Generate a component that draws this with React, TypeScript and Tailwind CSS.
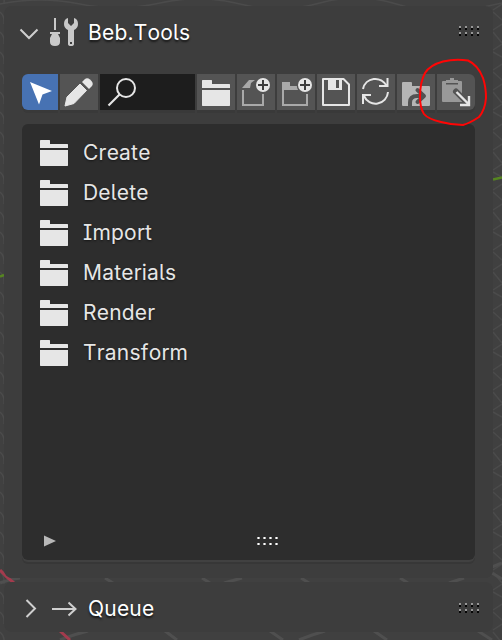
import type { ReactNode } from 'react';

const LIGHT = '#e6e6e6';

function Dots({ dark = true }: { dark?: boolean }) {
  return (
    <svg width="24" height="12" viewBox="0 0 24 12" shapeRendering="crispEdges" className="shrink-0">
      {[0, 6, 12, 18].map((x) =>
        [0, 6].map((y) => (
          <g key={`${x}-${y}`}>
            <rect x={x} y={y} width={dark ? 2 : 3} height="2" fill={dark ? '#979797' : '#b0b0b0'} />
            {dark ? <rect x={x} y={y + 2} width="2" height="2" fill="#050505" /> : <rect x={x + 1} y={y} width="1" height="2" fill="#fff" />}
          </g>
        )),
      )}
    </svg>
  );
}

function Folder() {
  return (
    <svg width="28" height="26" viewBox="0 0 28 26" fill={LIGHT} className="shrink-0">
      <path d="M.5 0h9l.5.500V4h17.500l.5.500V8H0V.5zM0 10h28v15.500l-.5.500H.5l-.5-.5z" />
    </svg>
  );
}

function Plus({ x }: { x: number }) {
  return (
    <g>
      <circle cx={x} cy="11" r="8.300" fill="#545454" />
      <circle cx={x} cy="11" r="7" fill={LIGHT} />
      <path d={`M${x - 5} 11h10M${x} 6v10`} stroke="#3d3d3d" strokeWidth="2" fill="none" />
    </g>
  );
}

function Glyph({ children }: { children: ReactNode }) {
  return (
    <svg width="38" height="36" viewBox="0 0 38 36" fill="none" className="block shrink-0">
      {children}
    </svg>
  );
}

function Tool({ children, label, className = '' }: { children: ReactNode; label: string; className?: string }) {
  return (
    <button aria-label={label} className={`h-9 w-[38px] shrink-0 overflow-hidden bg-[#545454] shadow-[0_3px_0_#393939] ${className}`}>
      {children}
    </button>
  );
}

function Toolbar() {
  return (
    <div className="flex h-9 w-[453px] gap-[2px]">
      <button aria-label="Select" className="h-9 w-9 shrink-0 overflow-hidden rounded-l-[6px] bg-[#4772b3] shadow-[0_3px_0_#393939]">
        <Glyph><path d="M8 8 30 17 20.5 20.5 17 30.5z" fill="#fff" /></Glyph>
      </button>
      <Tool label="Edit">
        <Glyph>
          <path d="M5 32 7 23 20 10 26.500 16.500 14 29.500z" fill={LIGHT} stroke={LIGHT} strokeWidth="1" strokeLinejoin="round" />
          <path d="m22 8 2.500-2.500Q27 3 30 5.500l1.500 1.500Q34 10 31.500 12.500L29 15z" fill={LIGHT} />
        </Glyph>
      </Tool>
      <div className="h-9 w-[95px] shrink-0 bg-[#1d1d1d] shadow-[0_3px_0_#393939]">
        <Glyph>
          <circle cx="26" cy="14" r="9" stroke={LIGHT} strokeWidth="2" />
          <path d="M19.500 20.500 8.500 31.500" stroke={LIGHT} strokeWidth="2.200" />
        </Glyph>
      </div>
      <Tool label="Open folder"><div className="flex h-9 items-center pl-[5px] pt-[2px]"><Folder /></div></Tool>
      <Tool label="New file">
        <Glyph>
          <path d="M5 14 12 6h6L14 9l-1 5z" fill="#a9a9a9" />
          <path d="M6 16v15h20V20" stroke="#a9a9a9" strokeWidth="2" />
          <Plus x={26} />
        </Glyph>
      </Tool>
      <Tool label="New folder">
        <Glyph>
          <path d="M5 8h8v4h7l1 4H5z" fill="#a9a9a9" />
          <path d="M6 16v15h24V20" stroke="#a9a9a9" strokeWidth="2" />
          <Plus x={28} />
        </Glyph>
      </Tool>
      <Tool label="Save">
        <Glyph>
          <path d="M6 5h20.500L32 10.500V31H6z" stroke={LIGHT} strokeWidth="2" strokeLinejoin="round" />
          <path d="M11 4h14v12H11zM19 6v8h3V6z" fill={LIGHT} fillRule="evenodd" />
        </Glyph>
      </Tool>
      <Tool label="Refresh">
        <Glyph>
          <path d="M6 15A12.500 12.500 0 0 1 29.500 12M30.500 4v8h-8.500M31 18A12.500 12.500 0 0 1 7 22M6 30v-9h8" stroke={LIGHT} strokeWidth="2" />
        </Glyph>
      </Tool>
      <Tool label="Move to folder">
        <Glyph>
          <path d="M5 9q0-1 1-1h8q1 0 1 1v3h17q1 0 1 1v18q0 1-1 1H6q-1 0-1-1z" fill="#b5b5b5" />
          <path d="M13 32v-3.500q0-6.500 7-6.500h6M20.500 16l6.500 6-6.500 6" stroke="#525252" strokeWidth="4" strokeLinecap="round" strokeLinejoin="round" />
        </Glyph>
      </Tool>
      <Tool label="Paste" className="rounded-r-[6px]">
        <Glyph>
          <path d="M5 8q0-1 1-1h18q1 0 1 1v20H6q-1 0-1-1z" fill="#999" />
          <path d="M9 6h12v4.500H9z" fill="#545454" />
          <path d="M9 6h4V4h4v2h4v3H9z" fill="#999" />
          <path d="m19 17.500 10 10" stroke="#545454" strokeWidth="6" strokeLinecap="round" />
          <path d="m19.500 18 12 12M32 22v9h-9" stroke={LIGHT} strokeWidth="2.400" />
        </Glyph>
      </Tool>
    </div>
  );
}

function Viewport() {
  const waves = Array.from({ length: 34 }, (_, i) => i * 20 - 8);
  return (
    <svg className="absolute inset-0" width="502" height="640" fill="none">
      <g stroke="#4b4b4b" strokeWidth="1.500">
        {waves.map((y, i) => (
          <path key={y} d={`M0 ${y}Q5 ${y + 4} 4 ${y + 12}M493 ${y}L502 ${y + 5 + (i % 3) * 3}M502 ${y + 12}l-9 6`} />
        ))}
        <path d="M0 4q40-8 80 0t80-1 80 1 80-1 80 2 102-2" />
        <path stroke="#4f4f4f" strokeWidth="3" d="M0 583q7-3 20-5M105 578l8 5M202 578l8 5M224 583l18-5M301 578l8 5M400 578l8 5M449 583l15-5M60 640q12-5 28-9M165 631l12 9M270 631l13 9M299 640q12-5 26-9M374 631l13 9M478 631l14 9M492 573l10 6M492 567l10-4" />
      </g>
      <path d="M0 276.500l4-1.500M493 179.500l9-2" stroke="#568521" strokeWidth="2.500" />
      <path d="M0 570q6 7 14 13M60 631l10 9" stroke="#a33b4d" strokeWidth="3" />
    </svg>
  );
}

const folders = ['Create', 'Delete', 'Import', 'Materials', 'Render', 'Transform'];

export default function App() {
  return (
    <main className="relative h-[640px] w-[502px] overflow-hidden bg-[#404040] font-['Inter',sans-serif] text-[21px] leading-6 tracking-[0.2px] text-[#e6e6e6] [font-feature-settings:'cv05','cv08'] [font-kerning:none]">
      <Viewport />
      <div className="relative flex flex-col gap-1 pl-1 pt-[6px]">
        <section className="h-[572px] w-[489px] rounded-[8px] bg-[#3d3d3d] px-[18px]">
          <header className="flex h-[68px] items-start">
            <svg width="60" height="36" viewBox="0 0 60 36" fill="none" className="mt-[7px] shrink-0 overflow-visible">
              <path d="m-1.500 16.500 8.500 8.500 8.500-8.500" stroke="#cfcfcf" strokeWidth="2" />
              <g fill="#c9c9c9">
                <path d="M32 5h2v12h-2zM28 19h10v2h-2l2 4v4q0 4-5 4t-5-4v-4l2-4h-2z" />
                <path fillRule="evenodd" d="M46 5q-4 1-4 6 0 4 4 6v14q0 2 3 2t3-2V17q4-2 4-6 0-5-4-6v5l-3 3-3-3zM48 29h2v2h-2z" />
              </g>
            </svg>
            <h1 className="ml-[6px] mt-[15px] font-normal leading-6 text-white [text-shadow:0_2px_2px_#171717]">Beb.Tools</h1>
            <div className="ml-auto mr-[-8px] mt-5"><Dots /></div>
          </header>
          <Toolbar />
          <div className="mt-[14px] flex h-[436px] w-[453px] flex-col rounded-[6px] bg-[#2d2d2d] pt-2 shadow-[0_2px_0_#414141,0_4px_0_#373737]">
            <ul>
              {folders.map((name) => (
                <li key={name} className="flex h-10 items-center gap-[15px] pl-[18px]">
                  <div className="pt-[2px]"><Folder /></div>
                  <span className="pt-[2px] [text-shadow:0_1px_2px_#161616]">{name}</span>
                </li>
              ))}
            </ul>
            <footer className="mb-[13px] mt-auto flex h-3 items-center pl-[22px]">
              <svg width="12" height="12"><path d="M0 .5v11L12 6z" fill="#b8b8b8" /></svg>
              <div className="ml-[201px] pt-1"><Dots dark={false} /></div>
            </footer>
          </div>
        </section>
        <section className="flex h-[50px] w-[489px] items-center rounded-[8px] bg-[#3d3d3d] pl-[21px] pr-[10px] pt-[3px]">
          <svg width="52" height="20" viewBox="0 0 52 20" fill="none" stroke="#cfcfcf" strokeWidth="2" className="shrink-0">
            <path d="m1.500 1 8.500 8.500L1.500 18M27 10h23M43.500 3.500l7 6.500-7 6.500" />
          </svg>
          <h2 className="ml-[11px] pt-px font-normal text-white [text-shadow:0_2px_2px_#171717]">Queue</h2>
          <div className="ml-auto"><Dots /></div>
        </section>
      </div>
      <svg className="pointer-events-none absolute inset-0" width="502" height="640" fill="none">
        <path d="M425 73Q430 65 443 61.500 455 58.500 468 60.500 478 65 483 78 486 87 486 98 485 110 479 117 470 123 463 125 452 125 441 122 428 119 424 114 420 108 420 97 420 82 425 73Z" stroke="#ff0505" strokeWidth="2" strokeLinejoin="round" />
      </svg>
    </main>
  );
}
